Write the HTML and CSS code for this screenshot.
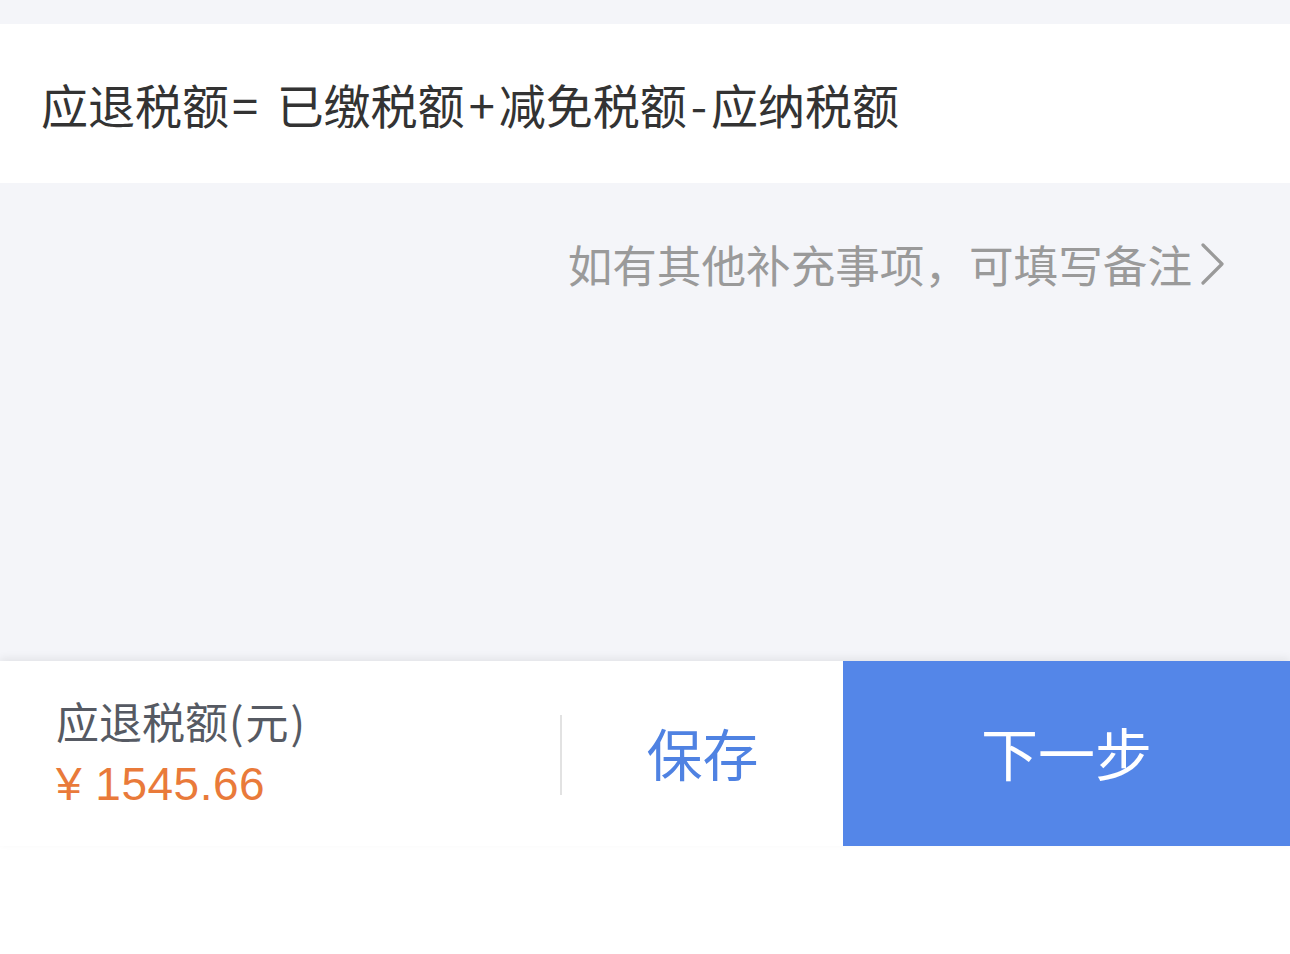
FILE: index.html
```html
<!DOCTYPE html>
<html lang="zh-CN">
<head>
<meta charset="utf-8">
<link rel="stylesheet" href="styles.css">
</head>
<body>
<div class="page">
  <div class="top-gap"></div>
  <div class="formula">应退税额<span class="op op-eq">= </span>已缴税额<span class="op">+</span>减免税额<span class="op">-</span>应纳税额</div>
  <div class="remark-area">
    <div class="remark">
      <span class="remark-text">如有其他补充事项，可填写备注</span>
      <svg class="chevron" width="26" height="42" viewBox="0 0 26 42"><path d="M3 2 L22 21 L3 40" fill="none" stroke="#9a9a9a" stroke-width="3.2" stroke-linecap="round" stroke-linejoin="round"/></svg>
    </div>
  </div>
  <div class="bar">
    <div class="amount-block">
      <div class="amount-label">应退税额<span class="paren">(元)</span></div>
      <div class="amount-value">¥ 1545.66</div>
    </div>
    <div class="divider"></div>
    <div class="save">保存</div>
    <div class="next">下一步</div>
  </div>
</div>
</body>
</html>
```
FILE: styles.css
```css
html, body {
  margin: 0;
  padding: 0;
  background: #ffffff;
}
body {
  font-family: "Noto Sans CJK SC", "Noto Sans", sans-serif;
  width: 1290px;
  height: 954px;
  overflow: hidden;
}
.top-gap {
  height: 24px;
  background: #f4f5f9;
}
.formula {
  height: 159px;
  display: flex;
  align-items: center;
  padding-left: 41px;
  font-size: 47px;
  color: #333333;
  background: #ffffff;
  white-space: pre;
}
.op {
  padding: 0 4px;
}
.op-eq {
  padding: 0 8px 0 3px;
}
.remark-area {
  height: 478px;
  background: #f4f5f9;
}
.remark {
  display: flex;
  justify-content: flex-end;
  align-items: center;
  padding-right: 64px;
  padding-top: 55px;
  gap: 8px;
}
.remark-text {
  font-size: 44.6px;
  color: #9a9a9a;
  line-height: 52px;
}
.chevron {
  display: block;
}
.bar {
  height: 185px;
  display: flex;
  background: #ffffff;
  box-shadow: 0 -3px 8px rgba(0, 0, 0, 0.07);
}
.amount-block {
  width: 504px;
  padding-left: 56px;
  display: flex;
  flex-direction: column;
  justify-content: center;
}
.amount-label {
  font-size: 43px;
  color: #565a63;
  line-height: 60px;
  margin-top: -4px;
}
.paren {
  letter-spacing: 2px;
  padding-left: 1px;
}
.amount-value {
  font-family: "Liberation Sans", Arial, sans-serif;
  font-size: 46px;
  color: #e97a3a;
  line-height: 60px;
  margin-top: 4px;
  white-space: pre;
  letter-spacing: 0.5px;
}
.divider {
  width: 2px;
  height: 80px;
  background: #e2e2e2;
  align-self: center;
  margin-top: 2px;
}
.save {
  width: 281px;
  display: flex;
  align-items: center;
  justify-content: center;
  font-size: 56px;
  color: #4f82e2;
  padding-bottom: 4px;
}
.next {
  flex: 1;
  display: flex;
  align-items: center;
  justify-content: center;
  font-size: 57px;
  color: #ffffff;
  background: #5486e8;
  padding-bottom: 6px;
}
```
